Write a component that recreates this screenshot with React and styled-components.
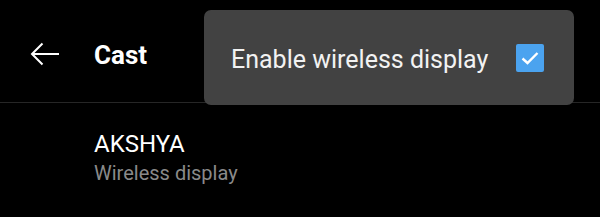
import React from 'react'
import styled, { createGlobalStyle } from 'styled-components'

const GlobalStyle = createGlobalStyle`
  html, body {
    margin: 0;
    padding: 0;
    background: #000;
  }
  body {
    font-family: Roboto, "Noto Sans", sans-serif;
    width: 600px;
    height: 217px;
    overflow: hidden;
  }
`

const Screen = styled.div`
  position: relative;
  width: 600px;
  height: 217px;
  background: #000;
  color: #fff;
`

const Toolbar = styled.div`
  display: flex;
  align-items: center;
  height: 103px;
  padding: 5px 0 0 30px;
  box-sizing: border-box;
  border-bottom: 1px solid #262626;
`

const BackButton = styled.div`
  display: flex;
  width: 30px;
  height: 24px;
  margin-right: 34px;
`

const Title = styled.h1`
  margin: 0;
  padding-top: 3px;
  font-size: 26px;
  font-weight: 700;
`

const Item = styled.div`
  display: flex;
  flex-direction: column;
  padding: 27px 0 0 94px;
`

const ItemTitle = styled.div`
  font-size: 24px;
  line-height: 28px;
  color: #fff;
`

const ItemSub = styled.div`
  margin-top: 3px;
  font-size: 20px;
  line-height: 24px;
  color: #8a8a8a;
`

const Menu = styled.div`
  position: absolute;
  left: 204px;
  top: 10px;
  width: 370px;
  height: 95px;
  box-sizing: border-box;
  background: #424242;
  border-radius: 7px;
  display: flex;
  align-items: center;
  justify-content: space-between;
  padding: 0 30px 0 27px;
`

const MenuLabel = styled.span`
  padding-top: 4px;
  font-size: 25px;
  color: #f2f2f2;
`

const Check = styled.div`
  width: 28px;
  height: 28px;
  border-radius: 2px;
  background: ${p => (p.checked ? '#4ba3ef' : 'transparent')};
  display: flex;
  align-items: center;
  justify-content: center;
`

export default function App() {
  return (
    <Screen>
      <GlobalStyle />
      <Toolbar>
        <BackButton>
          <svg width="30" height="24" viewBox="0 0 30 24" fill="none" stroke="#fff" strokeWidth="2">
            <path d="M29 12H2" />
            <path d="M12.5 1.5L2 12l10.5 10.5" />
          </svg>
        </BackButton>
        <Title>Cast</Title>
      </Toolbar>
      <Item>
        <ItemTitle>AKSHYA</ItemTitle>
        <ItemSub>Wireless display</ItemSub>
      </Item>
      <Menu>
        <MenuLabel>Enable wireless display</MenuLabel>
        <Check checked>
          <svg width="18" height="14" viewBox="0 0 18 14" fill="none" stroke="#fff" strokeWidth="2.4">
            <path d="M1.5 7.5l5 4.5L16.5 2" />
          </svg>
        </Check>
      </Menu>
    </Screen>
  )
}
